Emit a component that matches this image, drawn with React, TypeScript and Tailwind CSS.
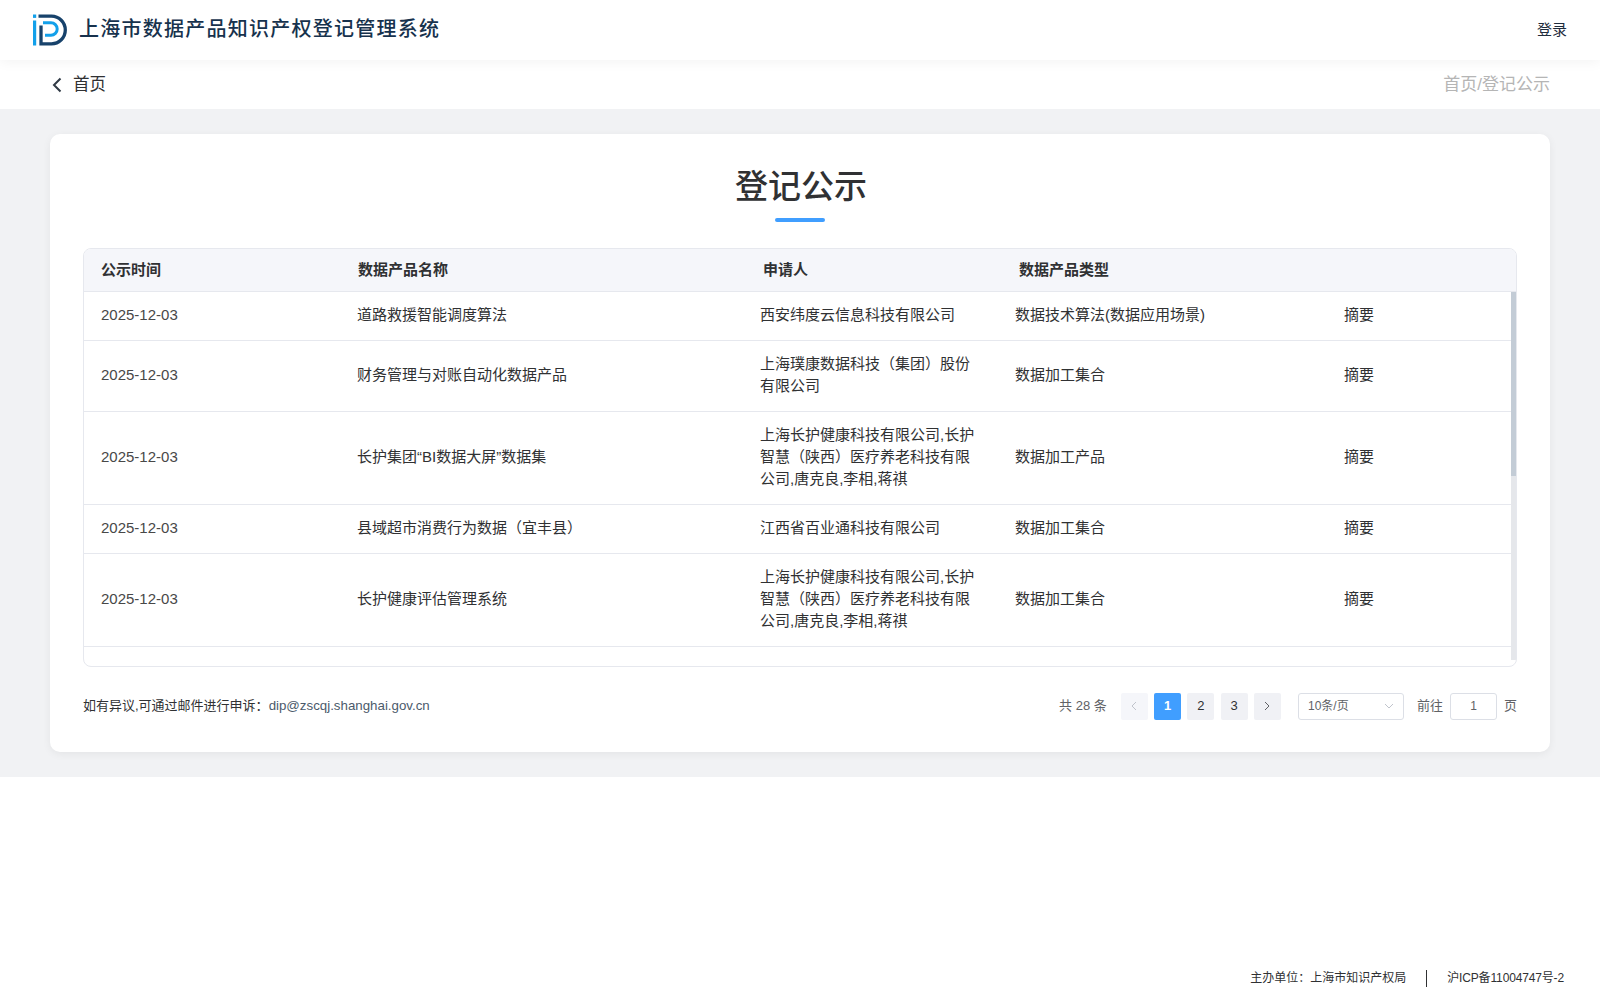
const cjk = "font-['Liberation_Sans','Noto_Sans_CJK_SC',sans-serif]";

const rows = [
  { h: "h-[49px]", name: "道路救援智能调度算法", who: ["西安纬度云信息科技有限公司"], type: "数据技术算法(数据应用场景)" },
  { h: "h-[71px]", name: "财务管理与对账自动化数据产品", who: ["上海璞康数据科技（集团）股份", "有限公司"], type: "数据加工集合" },
  { h: "h-[93px]", name: "长护集团“BI数据大屏”数据集", who: ["上海长护健康科技有限公司,长护", "智慧（陕西）医疗养老科技有限", "公司,唐克良,李相,蒋祺"], type: "数据加工产品" },
  { h: "h-[49px]", name: "县域超市消费行为数据（宜丰县）", who: ["江西省百业通科技有限公司"], type: "数据加工集合" },
  { h: "h-[93px]", name: "长护健康评估管理系统", who: ["上海长护健康科技有限公司,长护", "智慧（陕西）医疗养老科技有限", "公司,唐克良,李相,蒋祺"], type: "数据加工集合" },
];

function Logo() {
  return (
    <svg width="34" height="32" viewBox="0 0 34 31" fill="none">
      <rect x="0" y="0" width="3.2" height="3.4" fill="#12a0ea" />
      <rect x="0" y="6" width="3.2" height="25" fill="#12a0ea" />
      <path d="M5.5 1.7H18.5a13.8 13.8 0 0 1 0 27.6H8V11" stroke="#17426b" strokeWidth="3.3" />
      <path d="M10 8.3H18a6.2 6.2 0 0 1 0 12.4H12" stroke="#12a0ea" strokeWidth="3" />
    </svg>
  );
}

function Chevron({ dir }: { dir: "l" | "r" }) {
  const d = dir === "l" ? "M6 1 2 5l4 4" : "M2 1l4 4-4 4";
  return (
    <svg width="8" height="10" viewBox="0 0 8 10" fill="none">
      <path d={d} stroke="currentColor" strokeWidth="1" />
    </svg>
  );
}

export default function App() {
  return (
    <div className={`${cjk} relative h-[1000px] bg-white`}>
      <header className="h-[60px] bg-white flex items-center justify-between pl-[33px] pr-[33px] relative z-10 shadow-[0_2px_12px_rgba(0,0,0,0.05)]">
        <div className="flex items-center gap-[12px]">
          <Logo />
          <span className="pb-[2px] text-[20px] font-medium tracking-[1.25px] text-[#17324d]">上海市数据产品知识产权登记管理系统</span>
        </div>
        <span className="text-[15px] text-[#1f2d3d]">登录</span>
      </header>
      <div className="h-[49px] bg-white flex items-center justify-between pl-[52px] pr-[50px]">
        <div className="flex items-center gap-[11px] text-[#303133]">
          <svg width="10" height="16" viewBox="0 0 10 16" fill="none">
            <path d="M8.5 1.5 2 8l6.5 6.5" stroke="#303a45" strokeWidth="2" />
          </svg>
          <span className="text-[16.5px]">首页</span>
        </div>
        <span className="text-[17px] text-[#b5b5b5]">首页/登记公示</span>
      </div>
      <main className="bg-[#f1f2f4] px-[50px] py-[25px]">
        <section className="h-[618px] bg-white rounded-[10px] shadow-[0_2px_8px_rgba(0,0,0,0.06)] px-[33px] pt-[29px]">
          <h1 className="text-center pl-[2px] text-[33px] leading-[48px] font-medium text-[#303133]">登记公示</h1>
          <div className="mx-auto mt-[7px] w-[50px] h-[4px] rounded-full bg-[#409eff]" />
          <div className="mt-[26px] h-[419px] border border-[#e6e8ee] rounded-[8px] overflow-hidden flex flex-col">
            <div className="h-[43px] shrink-0 bg-[#f5f6fa] border-b border-[#e6e8ee] grid grid-cols-[257px_405px_256px_1fr] items-center pl-[17px] text-[15px] font-bold text-[#303133]">
              <span>公示时间</span>
              <span>数据产品名称</span>
              <span>申请人</span>
              <span>数据产品类型</span>
            </div>
            <div className="flex min-h-0 flex-1">
              <div className="flex-1 overflow-hidden">
                {rows.map((r, i) => (
                  <div key={i} className={`${r.h} pb-px border-b border-[#e6e8ee] grid grid-cols-[256px_403px_255px_329px_1fr] items-center pl-[17px] text-[15px] text-[#303133]`}>
                    <span className="text-[#484848]">2025-12-03</span>
                    <span>{r.name}</span>
                    <div className="leading-[22px] pb-px">
                      {r.who.map((l) => (
                        <div key={l}>{l}</div>
                      ))}
                    </div>
                    <span>{r.type}</span>
                    <span>摘要</span>
                  </div>
                ))}
              </div>
              <div className="w-[5px] shrink-0 bg-[#e5e7eb] mb-[6px]">
                <div className="h-[184px] bg-[#c3ccd6]" />
              </div>
            </div>
          </div>
          <div className="mt-[25px] flex items-center justify-between h-[28px]">
            <div className="text-[13px] text-[#303133]">
              如有异议,可通过邮件进行申诉：<span className="text-[13.3px] text-[#4b5a6b]">dip@zscqj.shanghai.gov.cn</span>
            </div>
            <div className="flex items-center text-[13px] text-[#606266]">
              <span className="mr-[14px]">共 28 条</span>
              <div className="w-[27px] h-[27px] rounded-[2px] bg-[#f5f6fa] flex items-center justify-center text-[#c0c4cc]">
                <Chevron dir="l" />
              </div>
              <div className="ml-[6.3px] w-[27px] h-[27px] rounded-[2px] bg-[#409eff] flex items-center justify-center text-white font-bold text-[13px]">1</div>
              <div className="ml-[6.3px] w-[27px] h-[27px] rounded-[2px] bg-[#f0f1f5] flex items-center justify-center text-[#303133]">2</div>
              <div className="ml-[6.3px] w-[27px] h-[27px] rounded-[2px] bg-[#f0f1f5] flex items-center justify-center text-[#303133]">3</div>
              <div className="ml-[6.3px] w-[27px] h-[27px] rounded-[2px] bg-[#f0f1f5] flex items-center justify-center text-[#606266]">
                <Chevron dir="r" />
              </div>
              <div className="ml-[17px] w-[106px] h-[27px] rounded-[3px] border border-[#dcdfe6] flex items-center justify-between pl-[9px] pr-[9px] text-[12px]">
                <span>10条/页</span>
                <svg width="10" height="6" viewBox="0 0 10 6" fill="none"><path d="M1 1l4 4 4-4" stroke="#c0c4cc" /></svg>
              </div>
              <span className="ml-[13px]">前往</span>
              <div className="ml-[7px] w-[47px] h-[27px] rounded-[3px] border border-[#dcdfe6] flex items-center justify-center text-[12px]">1</div>
              <span className="ml-[7px]">页</span>
            </div>
          </div>
        </section>
      </main>
      <footer className="absolute left-0 right-0 top-[965px] h-[26px] flex items-center justify-end pr-[36px] text-[12px] text-[#303133]">
        <span>主办单位：上海市知识产权局</span>
        <span className="mx-[20px] w-px h-[17px] bg-[#303133]" />
        <span className="tracking-[-0.15px]">沪ICP备11004747号-2</span>
      </footer>
    </div>
  );
}
